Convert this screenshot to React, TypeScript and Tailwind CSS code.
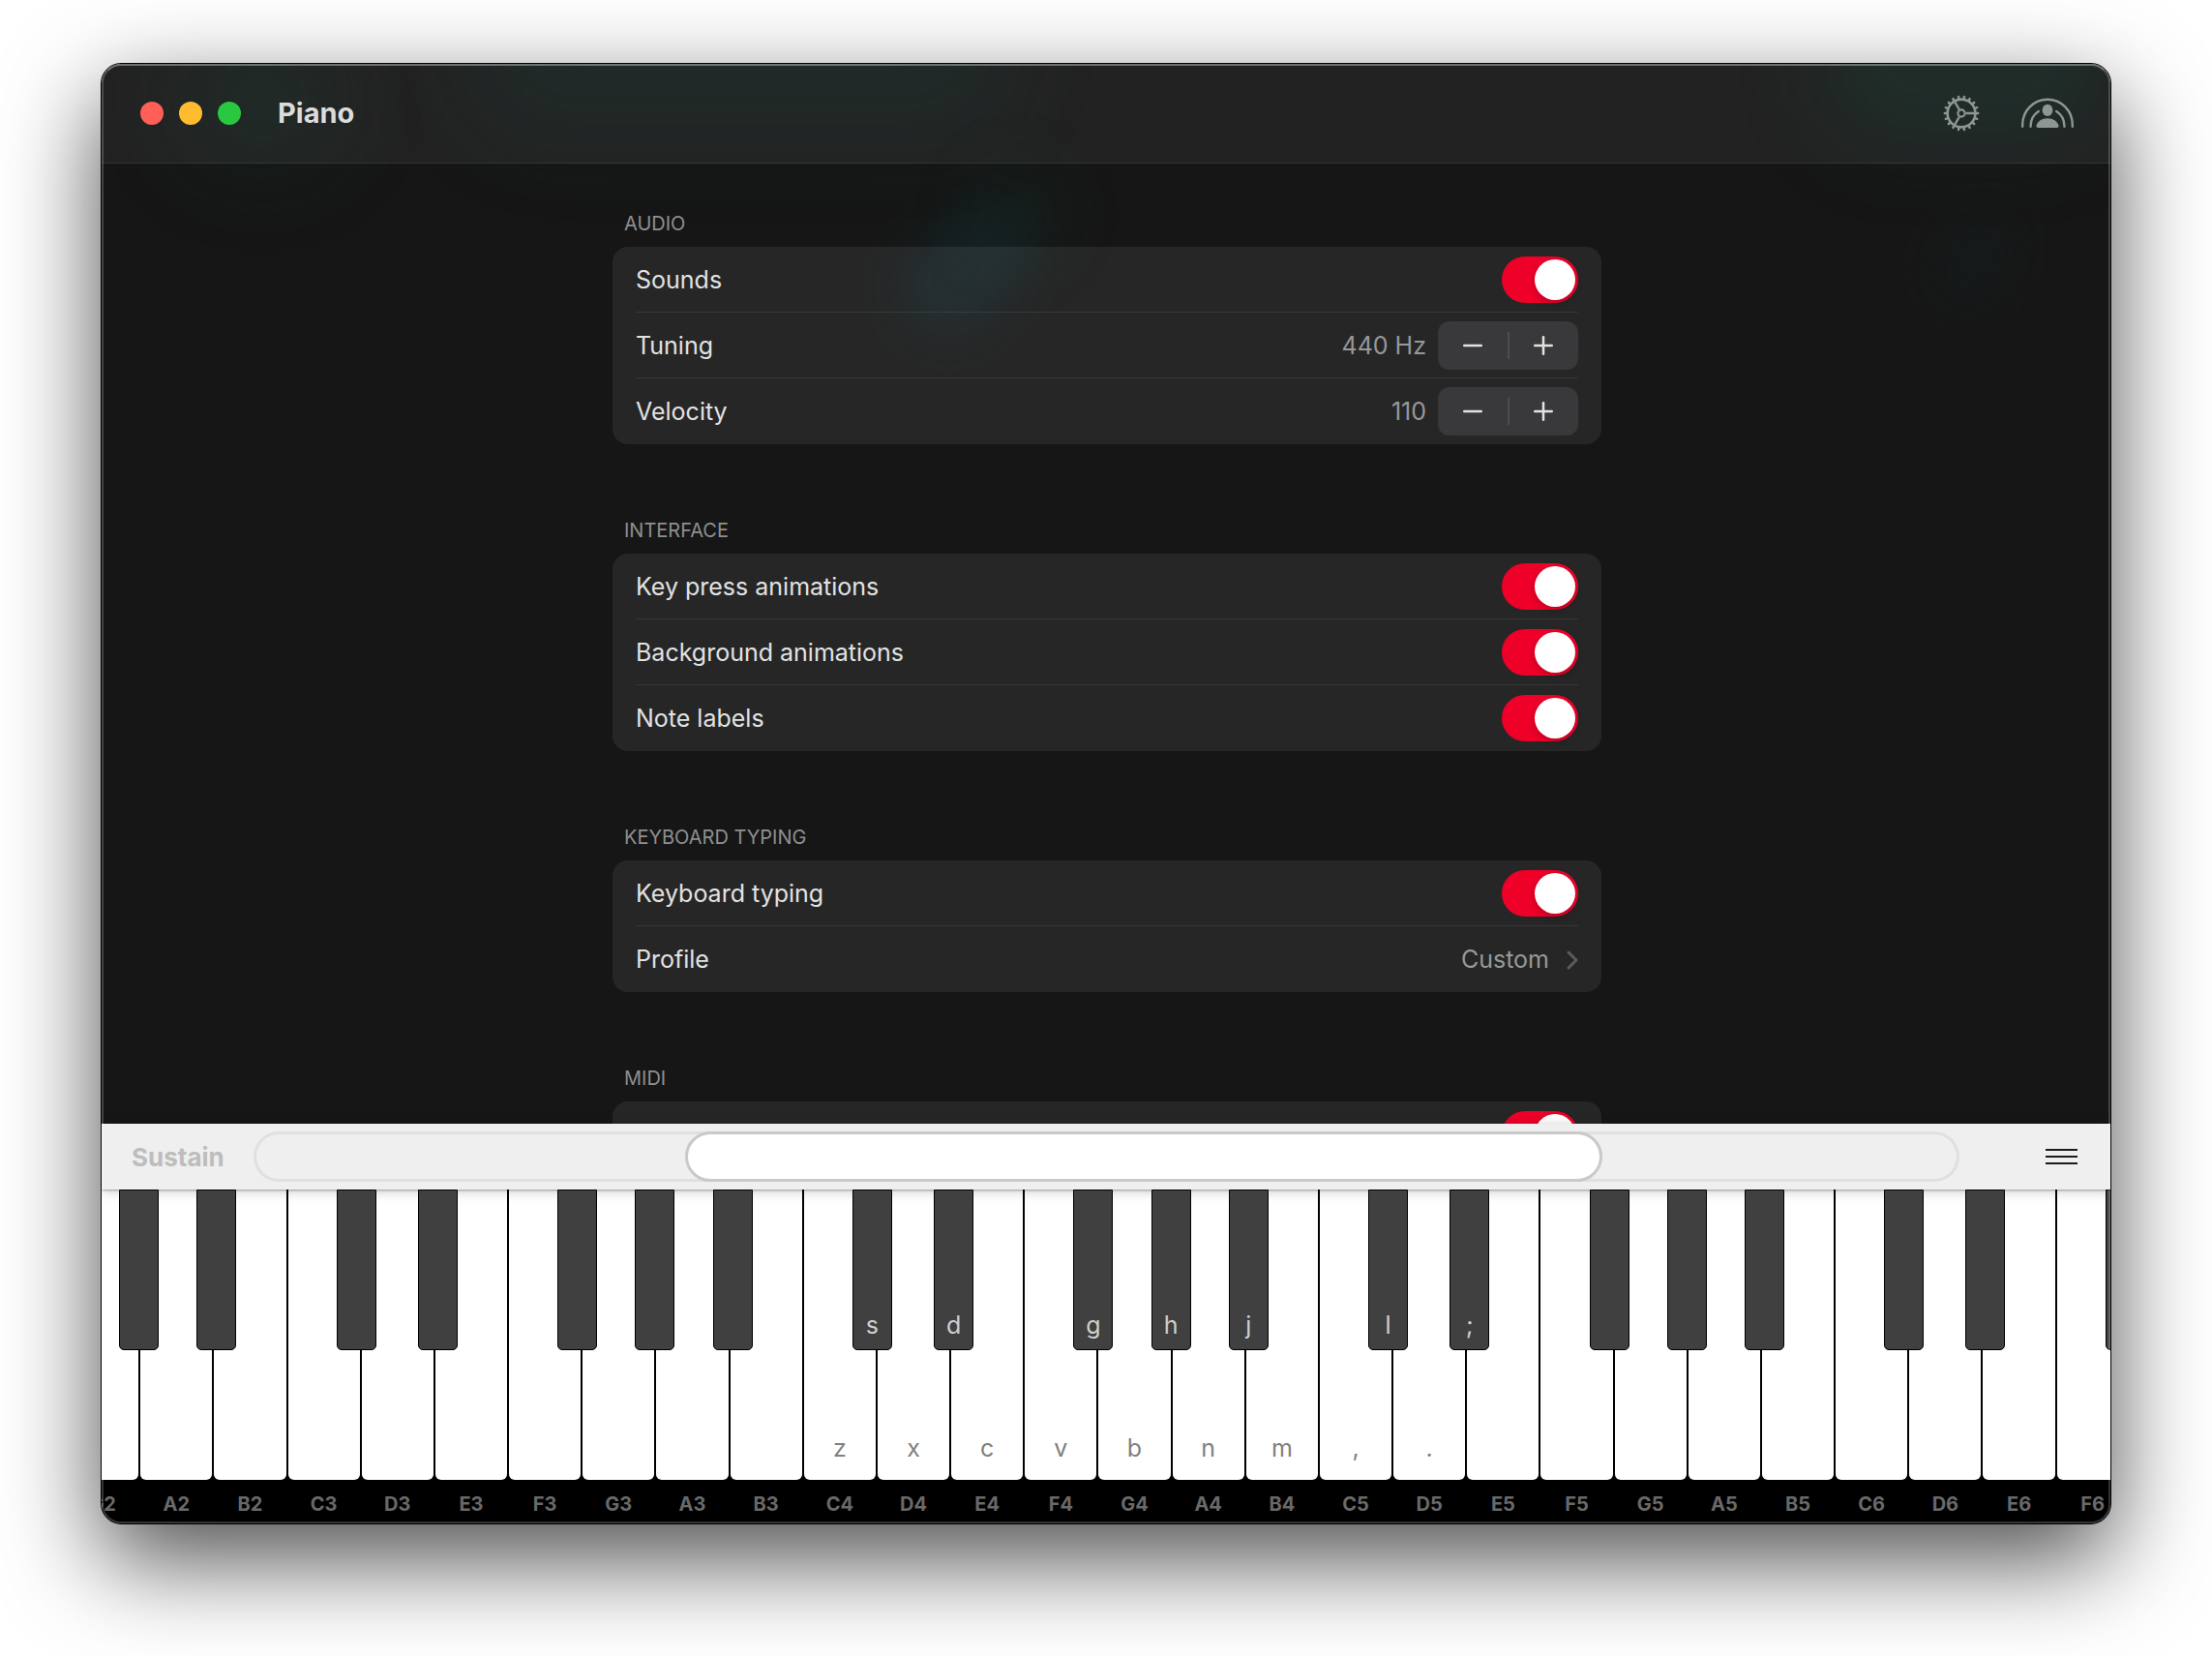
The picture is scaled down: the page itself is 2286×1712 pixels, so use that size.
import { useState } from 'react';
import type { ReactNode } from 'react';
import { ChevronRight, Minus, Plus } from 'lucide-react';

interface PianoKey {
  note: string;
  letter?: string;
  sharp?: 'left' | 'center' | 'right';
  sharpLetter?: string;
}

const sharps: Record<string, PianoKey['sharp']> = {
  C: 'left',
  D: 'right',
  F: 'left',
  G: 'center',
  A: 'right',
};

const letters: Record<string, string> = {
  C4: 'z',
  D4: 'x',
  E4: 'c',
  F4: 'v',
  G4: 'b',
  A4: 'n',
  B4: 'm',
  C5: ',',
  D5: '.',
};

const sharpLetters: Record<string, string> = {
  C4: 's',
  D4: 'd',
  F4: 'g',
  G4: 'h',
  A4: 'j',
  C5: 'l',
  D5: ';',
};

const notes =
  'G2 A2 B2 C3 D3 E3 F3 G3 A3 B3 C4 D4 E4 F4 G4 A4 B4 C5 D5 E5 F5 G5 A5 B5 C6 D6 E6 F6'.split(' ');

const keys: PianoKey[] = notes.map((note) => ({
  note,
  letter: letters[note],
  sharp: sharps[note[0]],
  sharpLetter: sharpLetters[note],
}));

// black keys lean away from the middle of their group
const sharpOffset = {
  left: '-ml-[25px]',
  center: '-ml-[21px]',
  right: '-ml-[17px]',
};

function GearIcon() {
  const teeth = Array.from({ length: 18 }, (_, i) => i * 20);

  return (
    <svg viewBox="-19 -19 38 38" className="size-[38px]" fill="none" stroke="currentColor">
      <circle r="14.4" strokeWidth="2.6" />
      <circle r="3.6" strokeWidth="2.2" />
      {teeth.map((angle) => (
        <path key={angle} d="M15.2 0H17.2" strokeWidth="2.5" strokeLinecap="round" transform={`rotate(${angle})`} />
      ))}
      {[0, 120, 240].map((angle) => (
        <path key={angle} d="M4.5 0H14" strokeWidth="2.3" transform={`rotate(${angle})`} />
      ))}
    </svg>
  );
}

function PerformerIcon() {
  return (
    <svg viewBox="-28 -32 56 34" className="h-[34px] w-[56px]" fill="none" stroke="currentColor">
      <g strokeWidth="2.4" strokeLinecap="round">
        <path d="M-25.8 -1.2V-3.2A25.8 26 0 0 1 25.8 -3.2V-1.2" />
        <path d="M-17.4 -1.2V-2.4A17.4 18 0 0 1 -9.2 -17" />
        <path d="M17.4 -1.2V-2.4A17.4 18 0 0 0 9.2 -17" />
      </g>
      <g fill="currentColor" stroke="none">
        <ellipse cy="-18.1" rx="5.4" ry="6.1" />
        <path d="M-9.8 0C-11.2 0 -11.8 -1 -11.4 -2.4C-10.4 -6.6 -5.8 -9.7 0 -9.7S10.4 -6.6 11.4 -2.4C11.8 -1 11.2 0 9.8 0Z" />
      </g>
    </svg>
  );
}

function Section({ title, children }: { title: string; children: ReactNode }) {
  return (
    <section className="mb-[75px]">
      <h2 className="mb-[10px] px-3 text-[20px] leading-7 text-[#8f8f8f]">{title}</h2>
      <div className="rounded-2xl bg-white/7 px-6">{children}</div>
    </section>
  );
}

function Row({ children }: { children: ReactNode }) {
  return (
    <div className="flex h-[68px] items-center justify-between border-b border-white/8 last:border-b-0">
      {children}
    </div>
  );
}

function ToggleRow({ id, label }: { id: string; label: string }) {
  return (
    <Row>
      <label htmlFor={id} className="pt-0.5">
        {label}
      </label>
      <input
        id={id}
        type="checkbox"
        role="switch"
        defaultChecked
        className="h-12 w-[79px] appearance-none rounded-full bg-[#4a4a4c] p-[3px] transition-colors before:block before:size-[42px] before:rounded-full before:bg-white before:shadow-[0_3px_8px_rgba(0,0,0,0.2)] before:transition-transform checked:bg-[#ee0029] checked:before:translate-x-[31px]"
      />
    </Row>
  );
}

interface StepperRowProps {
  label: string;
  initial: number;
  unit?: string;
}

function StepperRow({ label, initial, unit }: StepperRowProps) {
  const [value, setValue] = useState(initial);

  return (
    <Row>
      <span className="pt-0.5">{label}</span>
      <div className="flex items-center gap-3">
        <output className="pt-0.5 text-[#989898]">
          {value}
          {unit && ` ${unit}`}
        </output>
        <div className="flex h-[50px] w-[145px] items-center rounded-xl bg-[#39393b]">
          <button
            type="button"
            aria-label={`Decrease ${label}`}
            onClick={() => setValue(value - 1)}
            className="flex h-full flex-1 items-center justify-center"
          >
            <Minus className="size-[30px]" strokeWidth={2} />
          </button>
          <span className="h-7 w-0.5 bg-[#4d4d4f]" />
          <button
            type="button"
            aria-label={`Increase ${label}`}
            onClick={() => setValue(value + 1)}
            className="flex h-full flex-1 items-center justify-center"
          >
            <Plus className="size-[30px]" strokeWidth={2} />
          </button>
        </div>
      </div>
    </Row>
  );
}

function Glow() {
  return (
    <div className="pointer-events-none absolute inset-0 overflow-hidden">
      <div className="absolute -top-10 left-[80px] h-[150px] w-[170px] rounded-full bg-[#12352c]/30 blur-2xl" />
      <div className="absolute -top-24 left-[380px] h-[170px] w-[560px] rounded-full bg-[#12302c]/35 blur-2xl" />
      <div className="absolute top-[100px] left-[890px] h-[110px] w-[110px] rounded-full bg-[#0f2c26]/30 blur-xl" />
      <div className="absolute top-[165px] left-[820px] h-[100px] w-[140px] -rotate-45 rounded-full bg-[#12303a]/35 blur-xl" />
      <div className="absolute -top-20 right-0 h-[160px] w-[300px] rounded-full bg-[#0f3b31]/35 blur-2xl" />
      <div className="absolute top-[150px] right-[110px] h-[100px] w-[60px] rotate-30 rounded-full bg-[#12282c]/25 blur-xl" />
    </div>
  );
}

function Header() {
  return (
    <header className="relative flex h-[103px] shrink-0 items-center border-b border-white/8 bg-white/5 pr-[37px] pl-10">
      <div className="flex gap-4">
        <button type="button" aria-label="Close" className="size-6 rounded-full bg-[#ff5f57]" />
        <button type="button" aria-label="Minimize" className="size-6 rounded-full bg-[#febc2e]" />
        <button type="button" aria-label="Zoom" className="size-6 rounded-full bg-[#28c840]" />
      </div>
      <h1 className="ml-[38px] text-[29px] font-bold text-[#dcdcdc]">Piano</h1>
      <div className="ml-auto flex items-center gap-[42px] text-[#8f9593]">
        <button type="button" aria-label="Settings">
          <GearIcon />
        </button>
        <button type="button" aria-label="Performer">
          <PerformerIcon />
        </button>
      </div>
    </header>
  );
}

function Settings() {
  return (
    <main className="relative min-h-0 flex-1 overflow-y-auto pt-12 pr-6 pl-[26px] text-[25px] text-[#e2e2e2] [scrollbar-width:none]">
      <div className="mx-auto max-w-[1022px]">
        <Section title="AUDIO">
          <ToggleRow id="sounds" label="Sounds" />
          <StepperRow label="Tuning" initial={440} unit="Hz" />
          <StepperRow label="Velocity" initial={110} />
        </Section>
        <Section title="INTERFACE">
          <ToggleRow id="key-press" label="Key press animations" />
          <ToggleRow id="background" label="Background animations" />
          <ToggleRow id="note-labels" label="Note labels" />
        </Section>
        <Section title="KEYBOARD TYPING">
          <ToggleRow id="typing" label="Keyboard typing" />
          <Row>
            <span className="pt-0.5">Profile</span>
            <button type="button" className="flex items-center gap-2 pt-0.5 text-[#989898]">
              Custom
              <ChevronRight className="-mr-[10px] size-8 text-[#5c5c5e]" strokeWidth={2.2} />
            </button>
          </Row>
        </Section>
        <Section title="MIDI">
          <ToggleRow id="midi" label="Send and receive" />
        </Section>
      </div>
    </main>
  );
}

function Toolbar() {
  return (
    <div className="relative z-10 flex h-[68px] shrink-0 items-center bg-[#efefef] pr-[34px] pl-[31px] shadow-[0_1px_2px_rgba(0,0,0,0.3),0_2px_12px_rgba(0,0,0,0.2)]">
      <button type="button" className="w-[126px] shrink-0 text-left text-[26px] font-bold text-[#bdbdbd]">
        Sustain
      </button>
      <input
        type="range"
        aria-label="Keyboard position"
        min={0}
        max={1000}
        defaultValue={547}
        className="h-[52px] min-w-0 flex-1 appearance-none rounded-full shadow-[inset_0_0_0_3px_#e0e0e0] [&::-webkit-slider-thumb]:h-[52px] [&::-webkit-slider-thumb]:w-[53.8%] [&::-webkit-slider-thumb]:appearance-none [&::-webkit-slider-thumb]:rounded-full [&::-webkit-slider-thumb]:border-3 [&::-webkit-slider-thumb]:border-[#c9c9c9] [&::-webkit-slider-thumb]:bg-white"
      />
      <button type="button" aria-label="Menu" className="ml-[89px] flex w-[33px] shrink-0 flex-col gap-[5px]">
        <span className="h-0.5 w-full bg-[#1c1c1c]" />
        <span className="h-0.5 w-full bg-[#1c1c1c]" />
        <span className="h-0.5 w-full bg-[#1c1c1c]" />
      </button>
    </div>
  );
}

function Keyboard() {
  return (
    <div className="relative -mr-5 -ml-[37px] flex shrink-0 bg-black">
      {keys.map((key) => (
        <div key={key.note} className="relative flex-1">
          <button
            type="button"
            aria-label={key.note}
            className="mx-px flex h-[300px] w-[calc(100%-2px)] items-end justify-center rounded-b-md bg-white pb-[17px] text-[25px] leading-8 text-[#808080]"
          >
            {key.letter}
          </button>
          <div className="flex h-[45px] items-center justify-center pt-[5px] text-[20px] font-bold text-[#696969]">
            {key.note}
          </div>
          {key.sharp && (
            <button
              type="button"
              aria-label={`${key.note} sharp`}
              className={`absolute top-0 left-full z-10 flex h-[166px] w-[41px] items-end justify-center rounded-b-[5px] border border-black bg-[#404040] pb-[9px] text-[25px] leading-8 text-[#cfcfcf] ${sharpOffset[key.sharp]}`}
            >
              {key.sharpLetter}
            </button>
          )}
        </div>
      ))}
    </div>
  );
}

export default function App() {
  return (
    <div className="flex h-screen flex-col overflow-hidden bg-white px-[104px] pt-[65px] pb-[137px] font-['Inter',sans-serif]">
      <div className="relative flex min-h-0 flex-1 flex-col rounded-[21px] border border-black shadow-[0_36px_100px_rgba(0,0,0,0.7)]">
        <div className="relative flex min-h-0 flex-1 flex-col overflow-hidden rounded-[20px] bg-[#161616]">
          <Glow />
          <Header />
          <Settings />
          <Toolbar />
          <Keyboard />
          <div className="pointer-events-none absolute inset-0 z-20 rounded-[20px] border-2 border-white/20 border-t-white/35" />
        </div>
      </div>
    </div>
  );
}
